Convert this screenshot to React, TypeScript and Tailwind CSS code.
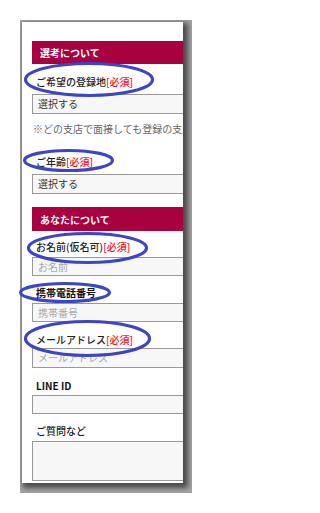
import React from "react";

const font = { fontFamily: '"Noto Sans CJK JP", "Noto Sans", sans-serif' };

function Req() {
  return <span className="text-[#ff1010]">[必須]</span>;
}

function Label({ children, bold, mt }: { children: React.ReactNode; bold?: boolean; mt: string }) {
  return (
    <div className={`${mt} pl-[4px] h-[14px] leading-[14px] text-[10px] whitespace-nowrap ${bold ? "font-bold text-[#111]" : "font-medium text-[#222]"}`}>
      {children}
    </div>
  );
}

function Box({ children, mt, h, muted }: { children?: React.ReactNode; mt: string; h: string; muted?: boolean }) {
  return (
    <div
      className={`${mt} ${h} w-[200px] border border-[#999999] bg-[#f7f7f7] pl-[5px] text-[10px] leading-[18px] whitespace-nowrap ${muted ? "text-[#a8a8a8]" : "text-[#333]"}`}
    >
      {children}
    </div>
  );
}

function Header({ children, mt, h }: { children: React.ReactNode; mt: string; h: string }) {
  return (
    <div className={`${mt} ${h} w-[200px] bg-[#a9003f] pl-[8px] flex items-center text-[10px] font-bold text-white whitespace-nowrap`}>
      {children}
    </div>
  );
}

export default function App() {
  return (
    <div className="relative w-[212px] h-[513px] bg-white overflow-hidden" style={font}>
      <div className="absolute left-[20px] top-[20px] w-[172px] h-[473px] bg-[#a4a4a4] pl-[2px] pt-[2px] overflow-hidden">
        <div className="relative w-[161px] h-[461px] bg-white shadow-[3px_3px_5px_2px_rgba(0,0,0,0.55)] overflow-hidden">
          <div className="pl-[10px] w-[220px] flex flex-col">
            <Header mt="mt-[19px]" h="h-[23px]">選考について</Header>
            <Label mt="mt-[11px]">
              ご希望の登録地<Req />
            </Label>
            <Box mt="mt-[5px]" h="h-[20px]">選択する</Box>
            <div className="mt-[8px] h-[14px] leading-[14px] pl-[1px] text-[10px] text-[#666] whitespace-nowrap">
              ※どの支店で面接しても登録の支店は選べます
            </div>
            <Label mt="mt-[19px]">
              ご年齢<Req />
            </Label>
            <Box mt="mt-[5px]" h="h-[20px]">選択する</Box>
            <Header mt="mt-[13px]" h="h-[24px]">あなたについて</Header>
            <Label mt="mt-[9px]">
              お名前(仮名可)<Req />
            </Label>
            <Box mt="mt-[3px]" h="h-[19px]" muted>
              お名前
            </Box>
            <Label mt="mt-[10px]" bold>
              携帯電話番号
            </Label>
            <Box mt="mt-[3px]" h="h-[19px]" muted>
              携帯番号
            </Box>
            <Label mt="mt-[11px]">
              メールアドレス<Req />
            </Label>
            <Box mt="mt-[1px]" h="h-[20px]" muted>
              メールアドレス
            </Box>
            <Label mt="mt-[11px]" bold>
              LINE ID
            </Label>
            <Box mt="mt-[2px]" h="h-[19px]" />
            <Label mt="mt-[10px]">ご質問など</Label>
            <Box mt="mt-[3px]" h="h-[40px]" />
          </div>
        </div>
      </div>
      <svg className="absolute left-0 top-0 pointer-events-none" width="212" height="513" viewBox="0 0 212 513">
        <g fill="none" stroke="#3b45c6" strokeWidth="3.2">
          <ellipse cx="89" cy="79.5" rx="63.5" ry="16" />
          <ellipse cx="68.5" cy="160.5" rx="44" ry="10" />
          <ellipse cx="87.5" cy="248" rx="59" ry="14.5" />
          <ellipse cx="65" cy="292.5" rx="44.5" ry="9" />
          <ellipse cx="87.5" cy="338.5" rx="62" ry="17" />
        </g>
      </svg>
    </div>
  );
}
